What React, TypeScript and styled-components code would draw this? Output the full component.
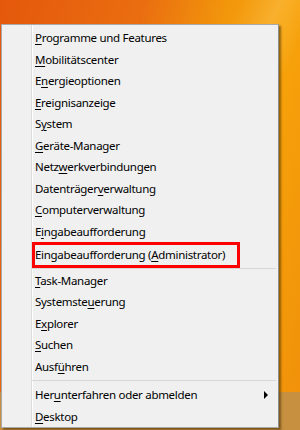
import React from "react";
import styled, { createGlobalStyle } from "styled-components";

const Global = createGlobalStyle`
  html, body { margin: 0; padding: 0; }
  body {
    width: 300px;
    height: 430px;
    overflow: hidden;
    font-family: "Noto Sans", "Open Sans", sans-serif;
  }
`;

const Desktop = styled.div`
  position: relative;
  width: 300px;
  height: 430px;
  overflow: hidden;
  background:
    linear-gradient(115deg, rgba(255,255,255,0) 48%, rgba(255,220,150,0.25) 56%, rgba(255,255,255,0) 64%),
    linear-gradient(105deg, #e4580c 0%, #ea6e10 35%, #f2960c 55%, #f7a30a 70%, #f0900a 100%);
  padding: 24px 0 0 1px;
  box-sizing: border-box;
`;

const Taskbar = styled.div`
  position: absolute;
  left: 0;
  right: 0;
  top: 392px;
  bottom: 0;
  background: #c69040;
`;

const Menu = styled.div`
  position: relative;
  z-index: 1;
  width: 278px;
  height: 404px;
  box-sizing: border-box;
  background: #f0f0f0;
  border: 1px solid #a9a9a9;
  border-right-color: #8e8e8e;
  box-shadow: 2px 2px 2px rgba(60, 40, 0, 0.55);
  display: flex;
`;

const Gutter = styled.div`
  width: 29px;
  flex: none;
  border-right: 1px solid #dcdcdc;
  box-shadow: 1px 0 0 #ffffff;
`;

const List = styled.div`
  flex: 1;
  display: flex;
  flex-direction: column;
  padding-top: 2px;
  padding-right: 2px;
`;

const Item = styled.div<{ $boxed?: boolean }>`
  position: relative;
  height: 21.5px;
  display: flex;
  align-items: center;
  padding-left: 3px;
  font-size: 11.5px;
  letter-spacing: -0.3px;
  color: #000;
  white-space: nowrap;
  ${(p) =>
    p.$boxed &&
    `
    outline: 3px solid #ff0000;
    outline-offset: -3px;
    margin-right: 36px;
    margin-top: -0.5px;
    height: 26px;
  `}
`;

const Key = styled.span`
  text-decoration: underline;
  text-underline-offset: 1.5px;
`;

const Separator = styled.div<{ $h: number }>`
  height: ${(p) => p.$h}px;
  display: flex;
  align-items: center;
  &::after {
    content: "";
    display: block;
    width: 100%;
    height: 1px;
    background: #d7d7d7;
  }
`;

const Arrow = styled.span`
  position: absolute;
  right: 8px;
  top: 50%;
  margin-top: -4px;
  width: 0;
  height: 0;
  border-top: 4px solid transparent;
  border-bottom: 4px solid transparent;
  border-left: 4px solid #000;
`;

type Entry = { pre: string; key: string; post: string };
const e = (pre: string, key: string, post: string): Entry => ({ pre, key, post });

const group1: Entry[] = [
  e("", "P", "rogramme und Features"),
  e("", "M", "obilitätscenter"),
  e("E", "n", "ergieoptionen"),
  e("", "E", "reignisanzeige"),
  e("S", "y", "stem"),
  e("", "G", "eräte-Manager"),
  e("Netz", "w", "erkverbindungen"),
  e("Datenträger", "v", "erwaltung"),
  e("", "C", "omputerverwaltung"),
  e("E", "i", "ngabeaufforderung"),
];

const group2: Entry[] = [
  e("", "T", "ask-Manager"),
  e("Systemste", "u", "erung"),
  e("E", "x", "plorer"),
  e("", "S", "uchen"),
  e("Ausf", "ü", "hren"),
];

const Label = ({ x }: { x: Entry }) => (
  <span>
    {x.pre}
    <Key>{x.key}</Key>
    {x.post}
  </span>
);

export default function App() {
  return (
    <>
      <Global />
      <Desktop>
        <Taskbar />
        <Menu>
          <Gutter />
          <List>
            {group1.map((x, i) => (
              <Item key={i}>
                <Label x={x} />
              </Item>
            ))}
            <Item $boxed>
              <span>
                Eingabeaufforderung (<Key>A</Key>dministrator)
              </span>
            </Item>
            <Separator $h={2} />
            {group2.map((x, i) => (
              <Item key={i}>
                <Label x={x} />
              </Item>
            ))}
            <Separator $h={7} />
            <Item>
              <Label x={e("Her", "u", "nterfahren oder abmelden")} />
              <Arrow />
            </Item>
            <Item>
              <Label x={e("", "D", "esktop")} />
            </Item>
          </List>
        </Menu>
      </Desktop>
    </>
  );
}
